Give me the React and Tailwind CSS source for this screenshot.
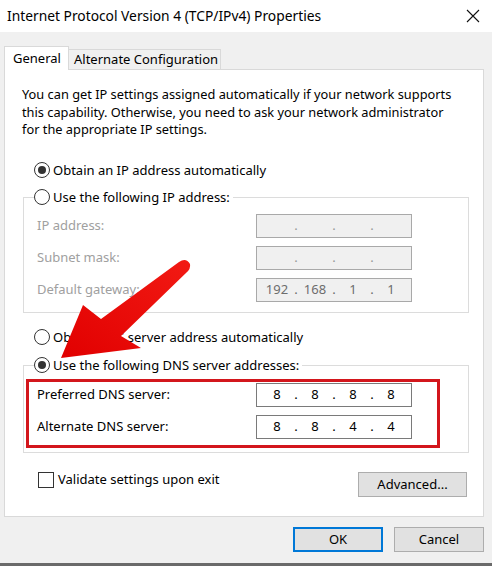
import React from "react";

const font = { fontFamily: '"Noto Sans", "Open Sans", sans-serif' };

const Radio = ({ checked, label }) => (
  <div className="flex items-center h-[16px]">
    <span className="w-[16px] h-[16px] rounded-full border border-[#333] bg-white flex items-center justify-center shrink-0">
      {checked && <span className="w-[8px] h-[8px] rounded-full bg-[#333]" />}
    </span>
    <span className="ml-[3px] leading-[16px] whitespace-nowrap">{label}</span>
  </div>
);

const IpBox = ({ values = ["", "", "", ""], disabled }) => (
  <div
    className={`w-[156px] h-[24px] border flex items-center pl-[4px] ${
      disabled ? "bg-[#f0f0f0] border-[#a9a9a9] text-[#6d6d6d]" : "bg-white border-[#7a7a7a] text-black"
    }`}
  >
    {values.map((v, i) => (
      <React.Fragment key={i}>
        <span className="w-[32px] text-center">{v}</span>
        {i < 3 && <span className={`w-[6px] text-center ${disabled && !v ? "text-[#999]" : ""}`}>.</span>}
      </React.Fragment>
    ))}
  </div>
);

const Row = ({ label, values, disabled, labelWidth }) => (
  <div className="flex items-center h-[24px]">
    <span className={`${labelWidth} ${disabled ? "text-[#a0a0a0]" : "text-black"}`}>{label}</span>
    <IpBox values={values} disabled={disabled} />
  </div>
);

const intro = [
  "You can get IP settings assigned automatically if your network supports",
  "this capability. Otherwise, you need to ask your network administrator",
  "for the appropriate IP settings.",
];

export default function App() {
  return (
    <div className="relative w-[492px] h-[566px] bg-[#f0f0f0] flex flex-col text-[13px] text-black overflow-hidden" style={font}>
      {/* title bar */}
      <div className="h-[32px] bg-white flex items-center justify-between pl-[7px] pr-[12px]">
        <span className="text-[13.8px]">Internet Protocol Version 4 (TCP/IPv4) Properties</span>
        <svg width="14" height="14" viewBox="0 0 14 14">
          <path d="M1 1 L13 13 M13 1 L1 13" stroke="#111" strokeWidth="1.1" />
        </svg>
      </div>

      {/* tabs */}
      <div className="flex items-end pl-[4px] pt-[14px] relative z-10">
        <div className="w-[65px] h-[24px] bg-white border border-b-0 border-[#d9d9d9] flex items-center pl-[8px] -mb-px">
          General
        </div>
        <div className="w-[152px] h-[20px] bg-[#f0f0f0] border border-l-0 border-b-0 border-[#d9d9d9] flex items-center pl-[5px]">
          Alternate Configuration
        </div>
      </div>

      {/* panel */}
      <div className="ml-[4px] w-[480px] h-[448px] bg-white border border-[#d9d9d9] flex flex-col">
        <div className="ml-[17px] mt-[16px] flex flex-col text-[12.8px]">
          {intro.map((line) => (
            <div key={line} className="h-[17.5px] leading-[17.5px] whitespace-nowrap">
              {line}
            </div>
          ))}
        </div>

        <div className="ml-[29px] mt-[23.5px]">
          <Radio checked label="Obtain an IP address automatically" />
        </div>

        <div className="ml-[18px] mt-[19px] w-[446px] border border-[#dcdcdc] flex flex-col pb-[10px]">
          <div className="-mt-[9px] ml-[10px] self-start bg-white pr-[3px]">
            <Radio label="Use the following IP address:" />
          </div>
          <div className="flex flex-col gap-[8px] mt-[9px] pl-[13px]">
            <Row disabled label="IP address:" labelWidth="w-[219px]" />
            <Row disabled label="Subnet mask:" labelWidth="w-[219px]" />
            <Row disabled label="Default gateway:" labelWidth="w-[219px]" values={["192", "168", "1", "1"]} />
          </div>
        </div>

        <div className="ml-[29px] mt-[16px]">
          <Radio label="Obtain DNS server address automatically" />
        </div>

        <div className="ml-[18px] mt-[20px] w-[446px] border border-[#dcdcdc] flex flex-col pb-[4px]">
          <div className="-mt-[9px] ml-[10px] self-start bg-white pr-[3px]">
            <Radio checked label="Use the following DNS server addresses:" />
          </div>
          <div className="ml-[2px] mt-[6px] w-[414px] border-[3px] border-[#d3161c] flex flex-col gap-[8px] pt-[1px] pb-[6px] pl-[8px]">
            <Row label="Preferred DNS server:" labelWidth="w-[219px]" values={["8", "8", "8", "8"]} />
            <Row label="Alternate DNS server:" labelWidth="w-[219px]" values={["8", "8", "4", "4"]} />
          </div>
        </div>

        <div className="mt-[19px] flex items-start justify-between pl-[33px] pr-[16px]">
          <div className="flex items-center h-[16px]">
            <span className="w-[16px] h-[16px] border border-[#333] bg-white shrink-0" />
            <span className="ml-[4px]">Validate settings upon exit</span>
          </div>
          <button className="w-[109px] h-[25px] bg-[#e1e1e1] border border-[#adadad] flex items-center justify-center">
            Advanced...
          </button>
        </div>
      </div>

      {/* footer buttons */}
      <div className="mt-[10px] flex justify-end gap-[11px] pr-[8px]">
        <button className="w-[90px] h-[25px] bg-[#e1e1e1] border-2 border-[#0078d7] flex items-center justify-center">OK</button>
        <button className="w-[90px] h-[25px] bg-[#e1e1e1] border border-[#adadad] flex items-center justify-center">Cancel</button>
      </div>

      <div className="mt-auto h-[3px] bg-[#6a6a6a]" />

      {/* red annotation arrow */}
      <svg className="absolute left-0 top-0 pointer-events-none" width="492" height="566" viewBox="0 0 492 566">
        <defs>
          <linearGradient id="arrowFill" x1="0" y1="1" x2="1" y2="0">
            <stop offset="0" stopColor="#e10000" />
            <stop offset="1" stopColor="#f21a14" />
          </linearGradient>
        </defs>
        <path
          d="M61 358 L83 305 L101 319 L179 262 Q186 257 190 264 Q191 269 186 273 L121 336 L141 348 Z"
          fill="url(#arrowFill)"
        />
      </svg>
    </div>
  );
}
